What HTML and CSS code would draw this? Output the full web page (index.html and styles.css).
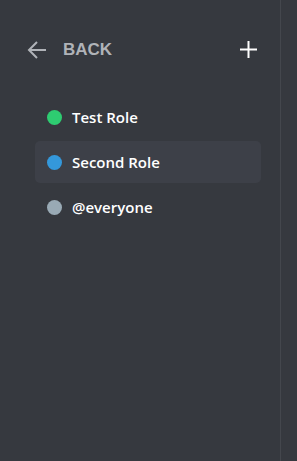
FILE: index.html
```html
<!DOCTYPE html>
<html lang="en">
<head>
  <meta charset="UTF-8" />
  <meta name="viewport" content="width=device-width, initial-scale=1.0"/>
  <title>Roles</title>
  <link rel="stylesheet" href="styles.css">
</head>
<body>
  <div class="sidebar">
    <div class="header">
      <div class="back">
        <svg class="arrow" width="20" height="20" viewBox="0 0 20 20">
          <path d="M19 10H2M10 2L2 10l8 8" fill="none" stroke="#b0b3b8" stroke-width="2"/>
        </svg>
        <span>BACK</span>
      </div>
      <svg class="plus" width="17" height="17" viewBox="0 0 17 17">
        <path d="M8.5 0v17M0 8.5h17" stroke="#fff" stroke-width="2"/>
      </svg>
    </div>

    <div class="roles">
      <div class="role">
        <span class="dot" style="background:#2ecc71"></span>
        <span class="name">Test Role</span>
      </div>
      <div class="role selected">
        <span class="dot" style="background:#3498db"></span>
        <span class="name">Second Role</span>
      </div>
      <div class="role">
        <span class="dot" style="background:#99aab5"></span>
        <span class="name">@everyone</span>
      </div>
    </div>
  </div>
</body>
</html>
```
FILE: styles.css
```css
html, body {
  height: 100%;
}
body {
  margin: 0;
  background: #36393f;
  font-family: 'Open Sans', sans-serif;
  color: #fff;
}
.sidebar {
  width: 281px;
  height: 100%;
  box-sizing: border-box;
  border-right: 1px solid #44474d;
  padding-top: 40px;
}
.header {
  display: flex;
  align-items: center;
  justify-content: space-between;
  padding: 0 23px 0 27px;
  height: 20px;
}
.back {
  display: flex;
  align-items: center;
  gap: 16px;
  color: #b0b3b8;
  font-family: 'Liberation Sans', sans-serif;
  font-weight: bold;
  font-size: 17px;
}
.arrow {
  display: block;
}
.plus {
  display: block;
  margin-top: -2px;
}
.roles {
  margin: 36px 0 0 35px;
  width: 226px;
  display: flex;
  flex-direction: column;
  gap: 3px;
}
.role {
  height: 42px;
  display: flex;
  align-items: center;
  padding-left: 12px;
  border-radius: 5px;
}
.role.selected {
  background: #3d4048;
}
.dot {
  width: 15px;
  height: 15px;
  border-radius: 50%;
  margin-right: 10px;
}
.name {
  font-size: 15px;
  font-weight: 600;
}
```
